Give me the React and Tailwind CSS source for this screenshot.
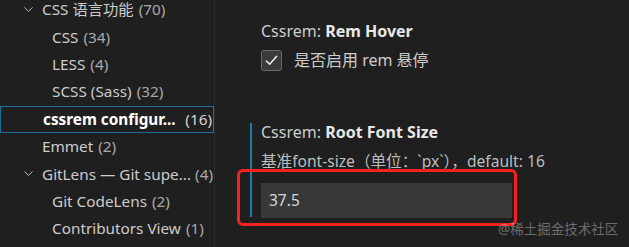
import { ChevronDown } from 'lucide-react';

const font = { fontFamily: '"Noto Sans", "Noto Sans CJK SC", sans-serif' };

const rows = [
  { label: 'CSS 语言功能', count: 70, indent: 'pl-[42px]', chevron: true },
  { label: 'CSS', count: 34, indent: 'pl-[52px]' },
  { label: 'LESS', count: 4, indent: 'pl-[52px]' },
  { label: 'SCSS (Sass)', count: 32, indent: 'pl-[52px]' },
  { label: 'cssrem configur...', count: 16, indent: 'pl-[42px]', selected: true, right: true },
  { label: 'Emmet', count: 2, indent: 'pl-[42px]' },
  { label: 'GitLens — Git supe...', count: 4, indent: 'pl-[42px]', chevron: true, right: true },
  { label: 'Git CodeLens', count: 2, indent: 'pl-[52px]' },
  { label: 'Contributors View', count: 1, indent: 'pl-[52px]' },
];

function TocRow({ label, count, indent, chevron, selected, right }) {
  return (
    <div
      className={`relative flex items-center h-[27.4px] pr-[1px] text-[15.3px] whitespace-nowrap ${indent} ${
        selected ? 'border border-[#1f6f96] text-white font-bold' : 'text-[#cccccc]'
      }`}
    >
      {chevron && (
        <ChevronDown size={15} strokeWidth={1.5} className="absolute left-[21px] top-[6px] text-[#c5c5c5]" />
      )}
      <span>{label}</span>
      <span
        className={`shrink-0 font-normal ${right ? 'ml-auto' : 'ml-[5px]'} ${
          selected ? 'text-[#d4d4d4]' : 'text-[#a9a9a9]'
        }`}
      >
        ({count})
      </span>
    </div>
  );
}

export default function App() {
  return (
    <div className="relative flex w-[629px] h-[247px] overflow-hidden bg-[#1f1f1f]" style={font}>
      <div className="w-[215px] shrink-0 border-r border-[#2b2b2b]">
        <div className="-mt-[4px]">
          {rows.map((r) => (
            <TocRow key={r.label} {...r} />
          ))}
        </div>
      </div>

      <div className="flex-1 pl-[35px] pt-[22px]">
        <div className="border-l-2 border-transparent pl-[9px]">
          <div className="h-[18px] flex items-center text-[16px] text-[#cccccc] whitespace-nowrap">
            Cssrem:&nbsp;<span className="font-bold text-[#e8e8e8]">Rem Hover</span>
          </div>
          <div className="flex items-center gap-[12px] mt-[9px] h-[22px]">
            <div className="w-[21px] h-[21px] rounded-[3px] bg-[#3a3a3a] border border-[#6a6a6a] flex items-center justify-center">
              <svg width="15" height="15" viewBox="0 0 16 16" fill="none">
                <path d="M2.5 8.5 L6 12 L13.5 3.5" stroke="#f0f0f0" strokeWidth="1.6" strokeLinecap="round" strokeLinejoin="round" />
              </svg>
            </div>
            <span className="text-[16px] text-[#cccccc]">是否启用 rem 悬停</span>
          </div>
        </div>

        <div className="mt-[52px] border-l-2 border-[#1d7ea3] pl-[9px] h-[94px]">
          <div className="h-[18px] flex items-center text-[16px] text-[#cccccc] whitespace-nowrap">
            Cssrem:&nbsp;<span className="font-bold text-[#e8e8e8]">Root Font Size</span>
          </div>
          <div className="mt-[11px] h-[20px] flex items-center text-[15.6px] text-[#bdbdbd] whitespace-nowrap">
            基准font-size（单位：`px`），default: 16
          </div>
          <div className="mt-[11px] w-[251px] h-[35px] bg-[#383838] flex items-center pl-[8px] text-[15.5px] text-[#d6d6d6]">
            37.5
          </div>
        </div>
      </div>

      <div className="absolute left-[237px] top-[169px] w-[280px] h-[57px] border-[3px] border-[#f5221f] rounded-[6px]" />
      <div className="absolute left-[498px] top-[219px] text-[13.5px] text-white/35">@稀土掘金技术社区</div>
    </div>
  );
}
